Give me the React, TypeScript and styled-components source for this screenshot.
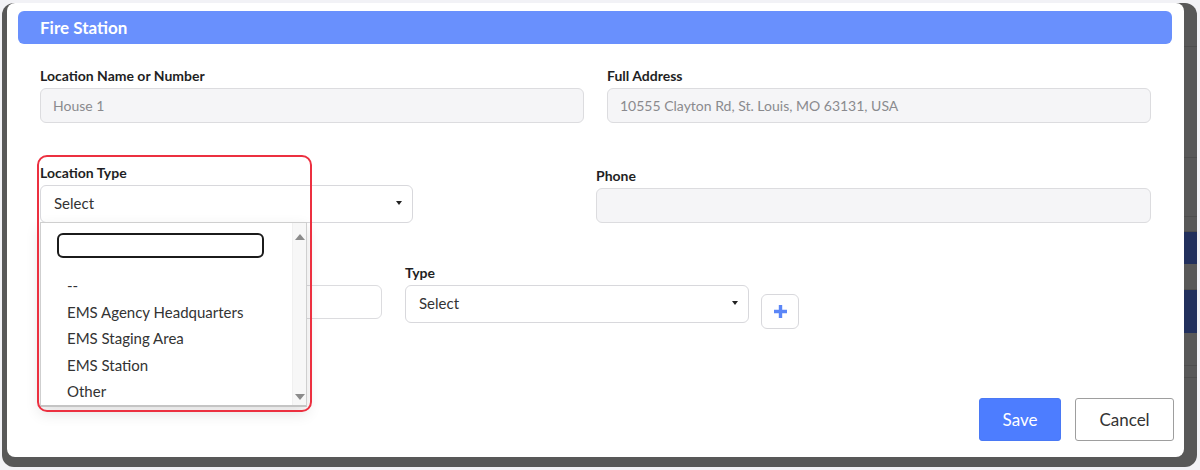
import React from "react";
import styled, { createGlobalStyle } from "styled-components";

const GlobalStyle = createGlobalStyle`
  * { box-sizing: border-box; }
  html, body {
    margin: 0;
    padding: 0;
    background: #f2f2f6;
    font-family: Lato, "Open Sans", Arial, sans-serif;
  }
  #root { padding-top: 3px; }
`;

const Frame = styled.div`
  margin-left: 2px;
  width: 1195px;
  height: 464px;
  background: #585858;
  border-radius: 12px;
  display: flex;
  padding: 0 0 10px 5px;
`;

const Modal = styled.div`
  width: 1177px;
  height: 454px;
  background: #fff;
  border-radius: 8px;
  display: flex;
  flex-direction: column;
`;

const SideStrip = styled.div`
  flex: 1;
  display: flex;
  flex-direction: column;
`;

const StripBlock = styled.div<{ $h: number; $navy?: boolean }>`
  height: ${(p) => p.$h}px;
  background: ${(p) => (p.$navy ? "#22305c" : "transparent")};
  border-bottom: ${(p) => (p.$navy ? "none" : "1px solid #4e4e4e")};
`;

const Header = styled.div`
  margin: 8px 12px 0 11px;
  height: 33px;
  background: #6990fd;
  border-radius: 6px;
  display: flex;
  align-items: center;
  padding-left: 22px;
  color: #fff;
  font-size: 17px;
  font-weight: 700;
`;

const Body = styled.div`
  padding: 0 33px;
  display: flex;
  flex-direction: column;
`;

const Row = styled.div<{ $cols: string; $gap: number; $top: number }>`
  display: grid;
  grid-template-columns: ${(p) => p.$cols};
  column-gap: ${(p) => p.$gap}px;
  margin-top: ${(p) => p.$top}px;
  align-items: end;
`;

const InlineRow = styled.div`
  display: flex;
  align-items: flex-start;
  gap: 23px;
  margin-top: 41px;
`;

const Field = styled.div<{ $w?: number }>`
  position: relative;
  display: flex;
  flex-direction: column;
  width: ${(p) => (p.$w ? `${p.$w}px` : "auto")};
`;

const Label = styled.label`
  display: block;
  min-height: 17px;
  font-size: 14px;
  font-weight: 700;
  line-height: 17px;
  color: #1f1f24;
  margin-bottom: 4px;
`;

const TextInput = styled.div<{ $h?: number; $white?: boolean }>`
  height: ${(p) => p.$h ?? 35}px;
  background: ${(p) => (p.$white ? "#fff" : "#f5f5f7")};
  border: 1px solid #dcdcdf;
  border-radius: 6px;
  display: flex;
  align-items: center;
  padding-left: 12px;
  font-size: 14px;
  color: #8a8a8e;
`;

const SelectBox = styled.div`
  height: 38px;
  background: #fff;
  border: 1px solid #d8d8dc;
  border-radius: 6px;
  display: flex;
  align-items: center;
  justify-content: space-between;
  padding: 0 10px 2px 13px;
  font-size: 15px;
  color: #333;
  line-height: 1;
`;

const Caret = styled.span`
  width: 0;
  height: 0;
  border-left: 3.5px solid transparent;
  border-right: 3.5px solid transparent;
  border-top: 4px solid #222;
`;

const AddButton = styled.button`
  margin: 30px 0 0 -11px;
  width: 38px;
  height: 35px;
  background: #fff;
  border: 1px solid #d8d8dc;
  border-radius: 6px;
  display: flex;
  align-items: center;
  justify-content: center;
  padding: 0;
`;

const Dropdown = styled.div`
  position: absolute;
  left: 0;
  top: 58px;
  width: 267px;
  height: 185px;
  background: #fff;
  border: 1px solid #cfcfcf;
  border-bottom: 2px solid #c4c4c4;
  box-shadow: 0 6px 14px rgba(0, 0, 0, 0.12);
  display: flex;
  z-index: 2;
`;

const DropdownMain = styled.div`
  flex: 1;
  display: flex;
  flex-direction: column;
  padding: 10px 0 0 16px;
`;

const SearchBox = styled.div`
  width: 207px;
  height: 25px;
  border: 2px solid #1b1b1b;
  border-radius: 6px;
  margin-bottom: 14px;
`;

const Option = styled.div`
  font-size: 15px;
  line-height: 26.5px;
  color: #333;
  padding-left: 10px;
`;

const Scrollbar = styled.div`
  width: 14px;
  background: #f7f7f7;
  border-left: 1px solid #f0f0f0;
  display: flex;
  flex-direction: column;
  justify-content: space-between;
  align-items: center;
  padding: 11px 0 5px;
`;

const Arrow = styled.span<{ $down?: boolean }>`
  width: 0;
  height: 0;
  border-left: 5px solid transparent;
  border-right: 5px solid transparent;
  ${(p) =>
    p.$down ? "border-top: 6px solid #8b8b8b;" : "border-bottom: 6px solid #8b8b8b;"}
`;

const Highlight = styled.div`
  position: absolute;
  left: -3px;
  top: -9px;
  width: 275px;
  height: 257px;
  border: 2.5px solid #ec3040;
  border-radius: 10px;
  z-index: 3;
  pointer-events: none;
`;

const Footer = styled.div`
  margin-top: auto;
  display: flex;
  justify-content: flex-end;
  gap: 14px;
  padding: 0 10px 16px 0;
`;

const Button = styled.button<{ $primary?: boolean }>`
  height: 43px;
  padding: 0;
  width: ${(p) => (p.$primary ? 82 : 99)}px;
  border-radius: 3px;
  font-family: Lato, Arial, sans-serif;
  font-size: 17px;
  background: ${(p) => (p.$primary ? "#4d7dff" : "#fff")};
  color: ${(p) => (p.$primary ? "#fff" : "#333")};
  border: ${(p) => (p.$primary ? "1px solid #4a79f5" : "1.5px solid #9e9e9e")};
`;

const options = ["--", "EMS Agency Headquarters", "EMS Staging Area", "EMS Station", "Other"];

export default function App() {
  return (
    <>
      <GlobalStyle />
      <Frame>
        <Modal>
          <Header>Fire Station</Header>
          <Body>
            <Row $cols="1fr 1fr" $gap={23} $top={23}>
              <Field>
                <Label>Location Name or Number</Label>
                <TextInput>House 1</TextInput>
              </Field>
              <Field>
                <Label>Full Address</Label>
                <TextInput>10555 Clayton Rd, St. Louis, MO 63131, USA</TextInput>
              </Field>
            </Row>
            <Row $cols="373px 1fr" $gap={183} $top={41}>
              <Field>
                <Label>Location Type</Label>
                <SelectBox>
                  Select
                  <Caret />
                </SelectBox>
                <Dropdown>
                  <DropdownMain>
                    <SearchBox />
                    {options.map((o) => (
                      <Option key={o}>{o}</Option>
                    ))}
                  </DropdownMain>
                  <Scrollbar>
                    <Arrow />
                    <Arrow $down />
                  </Scrollbar>
                </Dropdown>
                <Highlight />
              </Field>
              <Field>
                <Label>Phone</Label>
                <TextInput $h={35} />
              </Field>
            </Row>
            <InlineRow>
              <Field $w={342}>
                <Label />
                <TextInput $h={34} $white />
              </Field>
              <Field $w={344}>
                <Label>Type</Label>
                <SelectBox>
                  Select
                  <Caret />
                </SelectBox>
              </Field>
              <AddButton aria-label="Add">
                <svg width="17" height="17" viewBox="0 0 17 17">
                  <path d="M8.5 2v13M2 8.5h13" stroke="#5b86f7" strokeWidth="3.4" />
                </svg>
              </AddButton>
            </InlineRow>
          </Body>
          <Footer>
            <Button $primary>Save</Button>
            <Button>Cancel</Button>
          </Footer>
        </Modal>
        <SideStrip>
          <StripBlock $h={44} />
          <StripBlock $h={111} />
          <StripBlock $h={59} />
          <StripBlock $h={15} />
          <StripBlock $h={32} $navy />
          <StripBlock $h={26} />
          <StripBlock $h={43} $navy />
          <StripBlock $h={33} />
          <StripBlock $h={12} />
        </SideStrip>
      </Frame>
    </>
  );
}
